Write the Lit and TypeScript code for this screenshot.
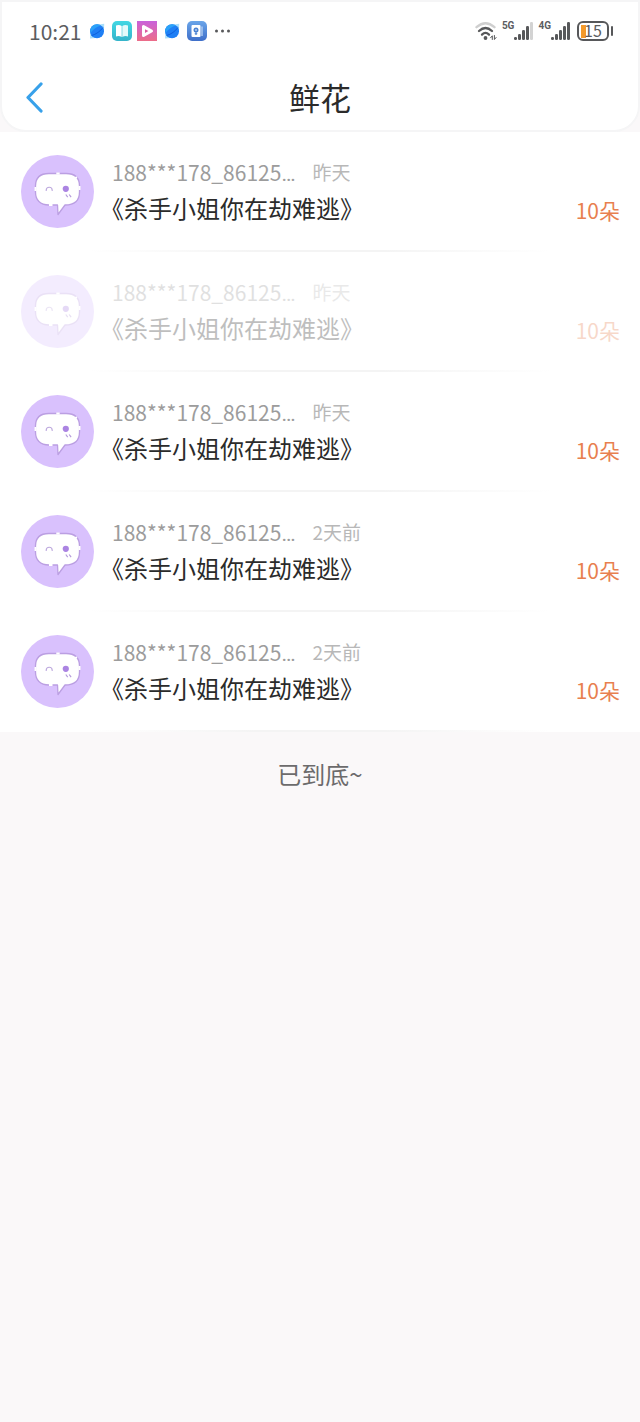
import { LitElement, html, css, svg } from "lit";
import { customElement, property } from "lit/decorators.js";
import { classMap } from "lit/directives/class-map.js";

interface Gift {
  user: string;
  when: string;
  book: string;
  count: number;
  faded?: boolean;
}

const user = "188***178_86125";
const book = "《杀手小姐你在劫难逃》";

const gifts: Gift[] = [
  { user, when: "昨天", book, count: 10 },
  { user, when: "昨天", book, count: 10, faded: true },
  { user, when: "昨天", book, count: 10 },
  { user, when: "2天前", book, count: 10 },
  { user, when: "2天前", book, count: 10 },
];

const signalBars = (lit: number) =>
  [0, 1, 2, 3, 4].map(
    (i) => svg`<rect x=${i * 4} y=${[15, 12, 8, 4, 0][i]} width="3" height=${[3, 6, 10, 14, 18][i]} rx="1.2"
      fill=${i < lit ? "#57585a" : "#d3d3d3"}></rect>`
  );

@customElement("status-bar")
export class StatusBar extends LitElement {
  static styles = css`
    :host {
      display: flex;
      align-items: center;
      justify-content: space-between;
      height: 58px;
      padding: 0 25px 0 27px;
      color: #5c5d5f;
    }
    .group {
      display: flex;
      align-items: center;
      gap: 5px;
    }
    .time {
      font-size: 21px;
      line-height: 24px;
      margin-right: 1px;
    }
    svg {
      display: block;
    }
    .cell {
      display: flex;
      align-items: center;
    }
    .net {
      font: 700 10px/12px "Roboto", sans-serif;
      align-self: flex-start;
      margin-top: -2px;
    }
    .battery {
      display: flex;
      align-items: center;
      gap: 2px;
      margin-left: 2px;
    }
    .level {
      box-sizing: border-box;
      width: 32px;
      height: 20px;
      border: 2px solid #57585a;
      border-radius: 6px;
      background: linear-gradient(#f39a2b, #f39a2b) 2px center / 5px 13px no-repeat;
      font-size: 16px;
      line-height: 15px;
      text-align: center;
    }
    .cap {
      width: 2px;
      height: 10px;
      border-radius: 1px;
      background: #57585a;
    }
  `;

  private planet() {
    return html`<svg width="20" height="20" viewBox="0 0 20 20" aria-hidden="true">
      <path d="M3 17.500 3.500 11 12 3.500l5.200-.8L17 9l-8 8Z" fill="#a9defb"></path>
      <circle cx="10" cy="10.200" r="7" fill="#1f7ff5"></circle>
      <path d="M3.200 9A7 7 0 0 1 14 4.500C10 5.500 6 8.500 3.500 12Z" fill="#2ba2f8"></path>
      <path d="M4.500 14.500C9 13.500 13.500 10 16 6.500" fill="none" stroke="#0c5fdc" stroke-width="1"></path>
    </svg>`;
  }

  render() {
    return html`
      <div class="group">
        <span class="time">10:21</span>
        ${this.planet()}
        <svg width="20" height="20" viewBox="0 0 20 20" aria-hidden="true">
          <defs><linearGradient id="b" x2="0" y2="1"><stop stop-color="#42d7e3"></stop><stop offset="1" stop-color="#35b4ca"></stop></linearGradient></defs>
          <rect width="20" height="20" rx="5" fill="url(#b)"></rect>
          <path d="M4 4.500q3.500-1 5.700.6v10.900q-2.500-1.400-5.700-.6Z" fill="#fff"></path>
          <path d="M16 4.500q-3.500-1-5.700.6v10.900q2.500-1.400 5.700-.6Z" fill="#e4fafa"></path>
        </svg>
        <svg width="20" height="20" viewBox="0 0 20 20" aria-hidden="true">
          <defs><linearGradient id="p" x2="0" y2="1"><stop stop-color="#c962db"></stop><stop offset="1" stop-color="#ec6d88"></stop></linearGradient></defs>
          <rect width="20" height="20" fill="url(#p)"></rect>
          <path d="M6.500 5.500v9l8-4.500Z" fill="#fff" stroke="#fff" stroke-width="3" stroke-linejoin="round"></path>
          <path d="M8 8.200v3.800l3.400-1.900Z" fill="#dc599f"></path>
        </svg>
        ${this.planet()}
        <svg width="20" height="20" viewBox="0 0 20 20" aria-hidden="true">
          <defs><linearGradient id="c" x2="0" y2="1"><stop stop-color="#6aa5e9"></stop><stop offset="1" stop-color="#3f6fc9"></stop></linearGradient></defs>
          <rect width="20" height="20" rx="5" fill="url(#c)"></rect>
          <rect x="4.500" y="4" width="9" height="12" rx="1" fill="#fff"></rect>
          <path d="M15 5.500v9.500" stroke="#bcd5f5" stroke-width="1.300"></path>
          <circle cx="9" cy="9" r="2.500" fill="#4b82d2"></circle>
          <circle cx="9" cy="9" r="0.800" fill="#fff"></circle>
          <path d="M9 10.500v3.500M7.700 12.800h2.600" stroke="#4b82d2" stroke-width="1.100"></path>
        </svg>
        <svg width="20" height="20" viewBox="0 0 20 20" fill="#57585a" aria-hidden="true">
          <circle cx="4.500" cy="10" r="1.500"></circle><circle cx="10.500" cy="10" r="1.500"></circle><circle cx="16.500" cy="10" r="1.500"></circle>
        </svg>
      </div>
      <div class="group">
        <svg width="22" height="20" viewBox="0 0 22 20" fill="none" stroke-width="2.300" stroke-linecap="round" aria-hidden="true">
          <path d="M1.500 6.200q9-8 18 0" stroke="#cfcfcf"></path>
          <path d="M4 10q6.500-6 13 0" stroke="#57585a"></path>
          <path d="M7 13.600q3.500-3.400 7 0" stroke="#57585a"></path>
          <circle cx="10.500" cy="17" r="1.900" fill="#57585a"></circle>
          <path d="M15.600 16.800 17.300 14.800V18.500M19.400 14.500v4l1.700-2" stroke="#57585a" stroke-width="1"></path>
        </svg>
        <span class="cell"><span class="net">5G</span>
          <svg width="19" height="18" viewBox="0 0 19 18" aria-hidden="true">${signalBars(4)}</svg></span>
        <span class="cell"><span class="net">4G</span>
          <svg width="19" height="18" viewBox="0 0 19 18" aria-hidden="true">${signalBars(5)}</svg></span>
        <span class="battery"><span class="level">15</span><span class="cap"></span></span>
      </div>
    `;
  }
}

@customElement("gift-row")
export class GiftRow extends LitElement {
  @property({ attribute: false }) gift!: Gift;

  static styles = css`
    :host {
      display: block;
      background: #fff;
    }
    .row {
      box-sizing: border-box;
      height: 120px;
      display: flex;
      align-items: flex-start;
      gap: 18px;
      padding: 23px 20px 0 21px;
      background: linear-gradient(90deg, transparent 14%, #f4f4f4 40%, #f4f4f4 60%, transparent 86%) bottom / 100% 2px no-repeat;
    }
    .faded > * {
      opacity: 0.3;
    }
    .avatar {
      flex: none;
      width: 73px;
      height: 73px;
    }
    .text {
      flex: 1;
      min-width: 0;
      line-height: 34px;
      white-space: nowrap;
    }
    .meta {
      display: flex;
      gap: 17px;
    }
    .user {
      font-size: 21px;
      color: #9c9c9c;
    }
    .more {
      font-family: "Roboto", sans-serif;
    }
    .when {
      font-size: 19px;
      color: #b8b8b8;
    }
    .book {
      font-size: 24px;
      color: #2b2b2b;
      font-feature-settings: "halt";
    }
    .count {
      align-self: flex-end;
      margin-bottom: 25px;
      font-size: 21px;
      line-height: 34px;
      color: #e8804f;
    }
  `;

  render() {
    const g = this.gift;
    return html`
      <div class=${classMap({ row: true, faded: !!g.faded })}>
        <svg class="avatar" viewBox="0 0 73 73" aria-hidden="true">
          <circle cx="36.500" cy="36.500" r="36.500" fill="#d9c1fd"></circle>
          <path d="M28 18.500H45C54 18.500 58.500 23 58.500 31V37C58.500 45 54 50 44 50L37 59.500 36.500 50H28C19 50 14.500 45 14.500 37V31C14.500 23 19 18.500 28 18.500Z"
            fill="#fff" stroke="#bb9fe2" stroke-width="1.300" stroke-linejoin="round"></path>
          <path d="M35.300 18.500h3.400M14.500 32v4M58.500 31v4M28 50h3.500M54.500 22l1.200 1.200" fill="none" stroke="#fff" stroke-width="2"></path>
          <path d="M25.200 36v-.8a3 3 0 0 1 6 0v.8" fill="none" stroke="#bda9de" stroke-width="1.100"></path>
          <circle cx="44.800" cy="33.800" r="3.100" fill="#ab84e2"></circle>
          <path d="M44.800 39.500l1.900 2.600M48.200 39.500l1.900 2.600" fill="none" stroke="#b59bdc" stroke-width="1.200"></path>
        </svg>
        <div class="text">
          <div class="meta">
            <span class="user">${g.user}<span class="more">…</span></span>
            <span class="when">${g.when}</span>
          </div>
          <div class="book">${g.book}</div>
        </div>
        <span class="count">${g.count}朵</span>
      </div>
    `;
  }
}

@customElement("app-root")
export class AppRoot extends LitElement {
  static styles = css`
    :host {
      display: block;
      min-height: 100vh;
      background: #faf8f9;
      font-family: "Noto Sans CJK SC", sans-serif;
    }
    header {
      background: #fff;
      border: 2px solid #f5f5f6;
      border-radius: 0 0 26px 26px;
    }
    .title-bar {
      box-sizing: border-box;
      display: grid;
      grid-template-columns: 64px 1fr 64px;
      align-items: center;
      height: 70px;
      padding-top: 4px;
    }
    .back {
      border: 0;
      padding: 0;
      background: none;
      height: 48px;
      cursor: pointer;
    }
    .back svg {
      display: block;
      margin: 0 auto;
    }
    h1 {
      margin: 0;
      font-size: 31px;
      line-height: 44px;
      font-weight: 400;
      text-align: center;
      color: #2b2b2b;
    }
    .end {
      margin: 0;
      padding: 24px 0;
      font-size: 24px;
      line-height: 36px;
      text-align: center;
      color: #6c6b6c;
    }
  `;

  render() {
    return html`
      <header>
        <status-bar></status-bar>
        <nav class="title-bar">
          <button class="back" aria-label="返回">
            <svg width="18" height="32" viewBox="0 0 18 32" fill="none" stroke="#38a1ea" stroke-width="3.200" stroke-linecap="round" stroke-linejoin="round">
              <path d="M16 3 3 16.500 16 30"></path>
            </svg>
          </button>
          <h1>鲜花</h1>
        </nav>
      </header>
      <main>
        ${gifts.map((g) => html`<gift-row .gift=${g}></gift-row>`)}
        <p class="end">已到底~</p>
      </main>
    `;
  }
}
